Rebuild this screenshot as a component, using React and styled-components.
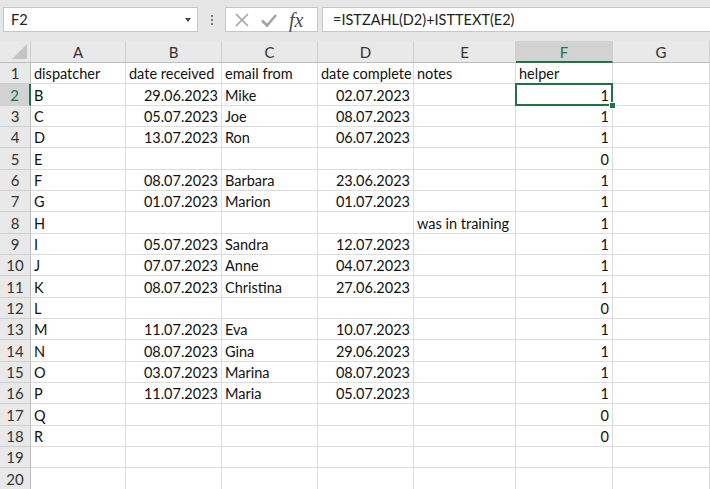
import React from "react";
import styled, { createGlobalStyle } from "styled-components";

const GlobalStyle = createGlobalStyle`
  html, body {
    margin: 0;
    padding: 0;
    background: #ffffff;
    overflow: hidden;
  }
  body {
    font-family: Lato, "Open Sans", "Liberation Sans", sans-serif;
  }
`;

const GREEN = "#217346";

const columns = ["A", "B", "C", "D", "E", "F", "G"];
const widths = [31, 95, 96, 96, 96, 102, 97, 97];

// [dispatcher, date received, email from, date complete, notes, helper]
const data = [
  ["dispatcher", "date received", "email from", "date complete", "notes", "helper"],
  ["B", "29.06.2023", "Mike", "02.07.2023", "", 1],
  ["C", "05.07.2023", "Joe", "08.07.2023", "", 1],
  ["D", "13.07.2023", "Ron", "06.07.2023", "", 1],
  ["E", "", "", "", "", 0],
  ["F", "08.07.2023", "Barbara", "23.06.2023", "", 1],
  ["G", "01.07.2023", "Marion", "01.07.2023", "", 1],
  ["H", "", "", "", "was in training", 1],
  ["I", "05.07.2023", "Sandra", "12.07.2023", "", 1],
  ["J", "07.07.2023", "Anne", "04.07.2023", "", 1],
  ["K", "08.07.2023", "Christina", "27.06.2023", "", 1],
  ["L", "", "", "", "", 0],
  ["M", "11.07.2023", "Eva", "10.07.2023", "", 1],
  ["N", "08.07.2023", "Gina", "29.06.2023", "", 1],
  ["O", "03.07.2023", "Marina", "08.07.2023", "", 1],
  ["P", "11.07.2023", "Maria", "05.07.2023", "", 1],
  ["Q", "", "", "", "", 0],
  ["R", "", "", "", "", 0],
  ["", "", "", "", "", ""],
  ["", "", "", "", "", ""],
];

const Page = styled.div`
  width: 710px;
  height: 489px;
  overflow: hidden;
  background: #ffffff;
`;

const Toolbar = styled.div`
  height: 41px;
  background: #e6e6e6;
  display: flex;
  align-items: flex-start;
  padding: 7px 0 0 3px;
  box-sizing: border-box;
`;

const NameBox = styled.div`
  width: 195px;
  height: 25px;
  box-sizing: border-box;
  background: #ffffff;
  border: 1px solid #c6c6c6;
  display: flex;
  align-items: center;
  justify-content: space-between;
  padding: 0 6px 0 7px;
  font-size: 14.5px;
  color: #222;
`;

const DropArrow = styled.span`
  width: 0;
  height: 0;
  border-left: 3.5px solid transparent;
  border-right: 3.5px solid transparent;
  border-top: 4px solid #444;
`;

const Grip = styled.div`
  width: 27px;
  height: 25px;
  display: flex;
  flex-direction: column;
  align-items: center;
  justify-content: center;
  gap: 2px;

  span {
    width: 2px;
    height: 2px;
    background: #7a7a7a;
  }
`;

const FxBox = styled.div`
  width: 93px;
  height: 25px;
  box-sizing: border-box;
  background: #ffffff;
  border: 1px solid #c6c6c6;
  display: flex;
  align-items: center;
  padding-left: 8px;
  gap: 10px;
  margin-right: 4px;
`;

const Fx = styled.span`
  font-family: "Liberation Serif", "DejaVu Serif", serif;
  font-style: italic;
  font-size: 20px;
  color: #4a4a4a;
  margin-left: 1px;
  line-height: 1;
`;

const FormulaInput = styled.div`
  flex: 1;
  height: 25px;
  box-sizing: border-box;
  background: #ffffff;
  border: 1px solid #c6c6c6;
  border-right: none;
  display: flex;
  align-items: center;
  padding-left: 10px;
  font-size: 14.5px;
  color: #222;
`;

const Sheet = styled.div`
  display: grid;
  grid-template-columns: ${widths.map((w) => `${w}px`).join(" ")};
  grid-template-rows: 22px;
  grid-auto-rows: 21.33px;
`;

const Corner = styled.div`
  background: #e9e9e9;
  border-right: 1px solid #cfcfcf;
  border-bottom: 1px solid #bdbdbd;
  position: relative;
  overflow: hidden;

  &::after {
    content: "";
    position: absolute;
    right: 3px;
    bottom: 3px;
    width: 0;
    height: 0;
    border-left: 15px solid transparent;
    border-bottom: 15px solid #c4c4c4;
  }
`;

const ColHeader = styled.div`
  background: ${(p) => (p.$active ? "#d2d2d2" : "#e9e9e9")};
  color: ${(p) => (p.$active ? GREEN : "#333")};
  border-right: 1px solid #cfcfcf;
  border-bottom: ${(p) => (p.$active ? `2px solid ${GREEN}` : "1px solid #bdbdbd")};
  box-sizing: border-box;
  display: flex;
  align-items: center;
  justify-content: center;
  font-size: 15px;
  padding-top: 1px;
`;

const RowHeader = styled.div`
  background: ${(p) => (p.$active ? "#d2d2d2" : "#e9e9e9")};
  color: ${(p) => (p.$active ? GREEN : "#333")};
  border-right: ${(p) => (p.$active ? `2px solid ${GREEN}` : "1px solid #bdbdbd")};
  border-bottom: 1px solid #cfcfcf;
  box-sizing: border-box;
  display: flex;
  align-items: flex-end;
  justify-content: center;
  padding-bottom: 1px;
  font-size: 15px;
`;

const Cell = styled.div`
  position: relative;
  border-right: 1px solid #dcdcdc;
  border-bottom: 1px solid #dcdcdc;
  box-sizing: border-box;
  display: flex;
  align-items: flex-end;
  justify-content: ${(p) => (p.$right ? "flex-end" : "flex-start")};
  padding: 0 3px 1px 3px;
  font-size: 14.5px;
  color: #111;
  white-space: nowrap;
  overflow: visible;

  ${(p) =>
    p.$active &&
    `
    &::before {
      content: "";
      position: absolute;
      left: -1px;
      top: -1px;
      right: -1px;
      bottom: -1px;
      border: 2px solid ${GREEN};
      pointer-events: none;
    }
    &::after {
      content: "";
      position: absolute;
      right: -4px;
      bottom: -4px;
      width: 5px;
      height: 5px;
      background: ${GREEN};
      border: 1px solid #ffffff;
      z-index: 2;
    }
  `}
`;

const CrossIcon = () => (
  <svg width="16" height="16" viewBox="0 0 16 16">
    <path d="M2 2 L14 14 M14 2 L2 14" stroke="#a3a3a3" strokeWidth="1.6" fill="none" />
  </svg>
);

const CheckIcon = () => (
  <svg width="18" height="16" viewBox="0 0 18 16">
    <path d="M2 8.5 L7 13.5 L16 3" stroke="#a3a3a3" strokeWidth="2.6" fill="none" />
  </svg>
);

const isNumeric = (v, col) => typeof v === "number" || ((col === 1 || col === 3) && /\d/.test(v));

export default function App() {
  return (
    <Page>
      <GlobalStyle />
      <Toolbar>
        <NameBox>
          F2
          <DropArrow />
        </NameBox>
        <Grip>
          <span />
          <span />
          <span />
        </Grip>
        <FxBox>
          <CrossIcon />
          <CheckIcon />
          <Fx>fx</Fx>
        </FxBox>
        <FormulaInput>=ISTZAHL(D2)+ISTTEXT(E2)</FormulaInput>
      </Toolbar>
      <Sheet>
        <Corner />
        {columns.map((c) => (
          <ColHeader key={c} $active={c === "F"}>
            {c}
          </ColHeader>
        ))}
        {data.map((row, r) => (
          <React.Fragment key={r}>
            <RowHeader $active={r === 1}>{r + 1}</RowHeader>
            {columns.map((c, ci) => {
              const v = ci < row.length ? row[ci] : "";
              const right = r > 0 && isNumeric(v, ci);
              return (
                <Cell key={c} $right={right} $active={r === 1 && c === "F"}>
                  {v}
                </Cell>
              );
            })}
          </React.Fragment>
        ))}
      </Sheet>
    </Page>
  );
}
